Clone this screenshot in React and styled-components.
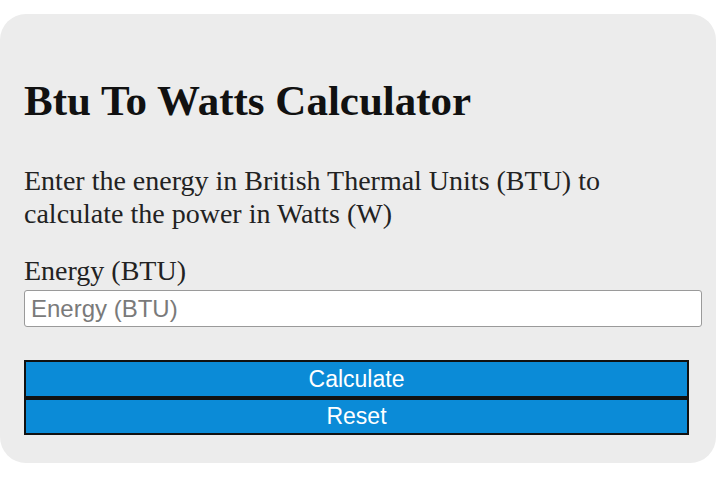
import React from "react";
import { styled, createGlobalStyle } from "styled-components";

const GlobalStyle = createGlobalStyle`
  html, body {
    margin: 0;
    padding: 0;
    background: #ffffff;
  }
  body {
    font-family: "Liberation Serif", "Times New Roman", serif;
    color: #111;
  }
`;

function App() {
  return (
    <Page>
      <GlobalStyle />
      <CalculatorCard>
        <Title>Btu To Watts Calculator</Title>
        <Intro>
          Enter the energy in British Thermal Units (BTU) to calculate the power
          in Watts (W)
        </Intro>
        <Field>
          <FieldLabel htmlFor="energy">Energy (BTU)</FieldLabel>
          <EnergyInput id="energy" type="text" placeholder="Energy (BTU)" />
        </Field>
        <ButtonStack>
          <ActionButton type="button">Calculate</ActionButton>
          <ActionButton type="button">Reset</ActionButton>
        </ButtonStack>
      </CalculatorCard>
    </Page>
  );
}

export default App;

const Page = styled.div`
  width: 720px;
  height: 477px;
  padding: 14px 4px 14px 0;
  box-sizing: border-box;
`;

const CalculatorCard = styled.div`
  width: 716px;
  height: 449px;
  box-sizing: border-box;
  padding: 62px 14px 0 24px;
  background-color: #ececec;
  border-radius: 26px;
  display: flex;
  flex-direction: column;
`;

const Title = styled.h1`
  margin: 0;
  font-size: 43px;
  line-height: 50px;
  font-weight: bold;
  color: #111;
`;

const Intro = styled.p`
  margin: 38px 0 0;
  width: 640px;
  font-size: 28px;
  line-height: 33px;
  color: #222;
`;

const Field = styled.div`
  margin-top: 25px;
  display: flex;
  flex-direction: column;
`;

const FieldLabel = styled.label`
  font-size: 28px;
  line-height: 32px;
  color: #222;
`;

const EnergyInput = styled.input`
  width: 678px;
  height: 37px;
  box-sizing: border-box;
  margin: 3px 0 0;
  padding: 0 6px;
  border: 1px solid #9a9a9a;
  border-radius: 3px;
  background: #fff;
  font-family: "Liberation Sans", Arial, sans-serif;
  font-size: 24px;
  color: #333;

  &::placeholder {
    color: #7a7a7a;
  }
`;

const ButtonStack = styled.div`
  margin-top: 33px;
  width: 665px;
  display: flex;
  flex-direction: column;
`;

const ActionButton = styled.button`
  height: 38px;
  box-sizing: border-box;
  margin: 0;
  padding: 0;
  border: 2px solid #111;
  background-color: #0b8bd7;
  color: #fff;
  font-family: "Liberation Sans", Arial, sans-serif;
  font-size: 23px;
  cursor: pointer;

  & + & {
    height: 37px;
  }
`;
